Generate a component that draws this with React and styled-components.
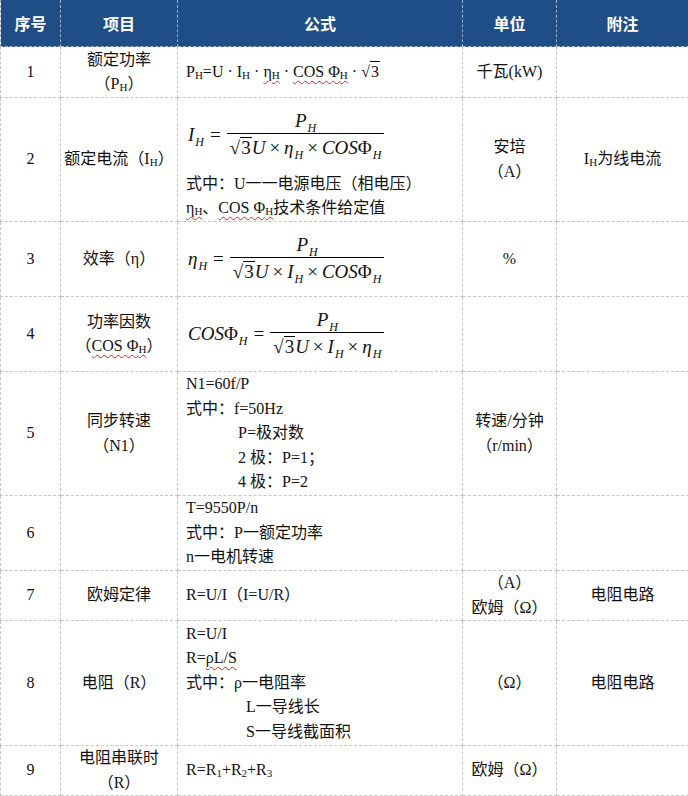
import React from "react";
import styled, { createGlobalStyle } from "styled-components";

const GlobalStyle = createGlobalStyle`
  html, body { margin: 0; padding: 0; background: #fff; }
`;

const Table = styled.table`
  width: 688px;
  border-collapse: collapse;
  table-layout: fixed;
  font-family: "Liberation Serif", "Noto Sans CJK SC", serif;
  font-size: 16px;
  color: #111;
`;

const Col = styled.col`
  width: ${(p) => p.$w}px;
`;

const HeadCell = styled.th`
  height: 46px;
  padding: 0;
  background: #1f4e86;
  color: #fff;
  font-family: "Noto Sans CJK SC", sans-serif;
  font-weight: 700;
  font-size: 16px;
  text-align: center;
  border: 1px dashed #9fb0c8;
  border-top: none;
`;

const Row = styled.tr`
  height: ${(p) => p.$h}px;
`;

const Cell = styled.td`
  padding: ${(p) => (p.$left ? "0 2px 0 8px" : "0")};
  text-align: ${(p) => (p.$left ? "left" : "center")};
  vertical-align: middle;
  line-height: 24.5px;
  white-space: nowrap;
  border: 1px dashed #c6c6c6;
`;

const Line = styled.div`
  padding-left: ${(p) => p.$indent || 0}px;
`;

const Sub = styled.sub`
  font-size: 11px;
  vertical-align: -2px;
  line-height: 0;
`;

const Wavy = styled.span`
  text-decoration: underline wavy #e02424;
  text-decoration-thickness: 1px;
  text-underline-offset: 3px;
`;

const Eq = styled.div`
  display: flex;
  width: fit-content;
  align-items: center;
  gap: 6px;
  padding: 10px 0 11px 2px;
  font-size: 19px;
  font-style: italic;
  line-height: normal;
`;

const Frac = styled.span`
  display: inline-flex;
  flex-direction: column;
  align-items: center;
`;

const Num = styled.span`
  line-height: 24px;
  padding: 0 4px;
`;

const Den = styled.span`
  line-height: 26px;
  padding: 1px 3px 0;
  border-top: 1px solid #000;
`;

const Up = styled.span`
  font-style: normal;
`;

const Over = styled.span`
  font-style: normal;
  border-top: 1px solid #000;
  line-height: 20px;
  display: inline-block;
  padding: 0 1px;
`;

const Op = styled.span`
  font-style: normal;
  margin: 0 4px;
`;

const MSub = styled.sub`
  font-size: 12px;
  vertical-align: -5px;
  line-height: 0;
  margin-left: 1px;
`;

const Sqrt3 = () => (
  <>
    <Up>√</Up>
    <Over>3</Over>
  </>
);

const HEADERS = ["序号", "项目", "公式", "单位", "附注"];
const WIDTHS = [60, 117, 285, 94, 132];

export default function App() {
  return (
    <>
      <GlobalStyle />
      <Table>
        <colgroup>
          {WIDTHS.map((w, i) => (
            <Col key={i} $w={w} />
          ))}
        </colgroup>
        <thead>
          <tr>
            {HEADERS.map((h) => (
              <HeadCell key={h}>{h}</HeadCell>
            ))}
          </tr>
        </thead>
        <tbody>
          <Row $h={51}>
            <Cell>1</Cell>
            <Cell>
              <Line>额定功率</Line>
              <Line>（P<Sub>H</Sub>）</Line>
            </Cell>
            <Cell $left>
              P<Sub>H</Sub>=U · I<Sub>H</Sub> · <Wavy>η<Sub>H</Sub></Wavy> ·{" "}
              <Wavy>COS Φ<Sub>H</Sub></Wavy> · <Sqrt3 />
            </Cell>
            <Cell>千瓦(kW)</Cell>
            <Cell />
          </Row>

          <Row $h={124}>
            <Cell>2</Cell>
            <Cell>额定电流（I<Sub>H</Sub>）</Cell>
            <Cell $left>
              <Eq>
                <span>
                  I<MSub>H</MSub>
                </span>
                <Up>=</Up>
                <Frac>
                  <Num>
                    P<MSub>H</MSub>
                  </Num>
                  <Den>
                    <Sqrt3 />U<Op>×</Op>η<MSub>H</MSub>
                    <Op>×</Op>COS<Up>Φ</Up>
                    <MSub>H</MSub>
                  </Den>
                </Frac>
              </Eq>
              <Line>式中：U一一电源电压（相电压）</Line>
              <Line>
                <Wavy>η<Sub>H</Sub></Wavy>、<Wavy>COS Φ<Sub>H</Sub></Wavy>技术条件给定值
              </Line>
            </Cell>
            <Cell>
              <Line>安培</Line>
              <Line>（A）</Line>
            </Cell>
            <Cell>I<Sub>H</Sub>为线电流</Cell>
          </Row>

          <Row $h={75}>
            <Cell>3</Cell>
            <Cell>效率（η）</Cell>
            <Cell $left>
              <Eq>
                <span>
                  η<MSub>H</MSub>
                </span>
                <Up>=</Up>
                <Frac>
                  <Num>
                    P<MSub>H</MSub>
                  </Num>
                  <Den>
                    <Sqrt3 />U<Op>×</Op>I<MSub>H</MSub>
                    <Op>×</Op>COS<Up>Φ</Up>
                    <MSub>H</MSub>
                  </Den>
                </Frac>
              </Eq>
            </Cell>
            <Cell>%</Cell>
            <Cell />
          </Row>

          <Row $h={75}>
            <Cell>4</Cell>
            <Cell>
              <Line>功率因数</Line>
              <Line>
                （<Wavy>COS Φ<Sub>H</Sub></Wavy>）
              </Line>
            </Cell>
            <Cell $left>
              <Eq>
                <span>
                  COS<Up>Φ</Up>
                  <MSub>H</MSub>
                </span>
                <Up>=</Up>
                <Frac>
                  <Num>
                    P<MSub>H</MSub>
                  </Num>
                  <Den>
                    <Sqrt3 />U<Op>×</Op>I<MSub>H</MSub>
                    <Op>×</Op>η<MSub>H</MSub>
                  </Den>
                </Frac>
              </Eq>
            </Cell>
            <Cell />
            <Cell />
          </Row>

          <Row $h={124}>
            <Cell>5</Cell>
            <Cell>
              <Line>同步转速</Line>
              <Line>（N1）</Line>
            </Cell>
            <Cell $left>
              <Line>N1=60f/P</Line>
              <Line>式中：f=50Hz</Line>
              <Line $indent={52}>P=极对数</Line>
              <Line $indent={52}>2 极：P=1；</Line>
              <Line $indent={52}>4 极：P=2</Line>
            </Cell>
            <Cell>
              <Line>转速/分钟</Line>
              <Line>（r/min）</Line>
            </Cell>
            <Cell />
          </Row>

          <Row $h={75}>
            <Cell>6</Cell>
            <Cell />
            <Cell $left>
              <Line>T=9550P/n</Line>
              <Line>式中：P一额定功率</Line>
              <Line>n一电机转速</Line>
            </Cell>
            <Cell />
            <Cell />
          </Row>

          <Row $h={50}>
            <Cell>7</Cell>
            <Cell>欧姆定律</Cell>
            <Cell $left>R=U/I（I=U/R）</Cell>
            <Cell>
              <Line>（A）</Line>
              <Line>欧姆（Ω）</Line>
            </Cell>
            <Cell>电阻电路</Cell>
          </Row>

          <Row $h={125}>
            <Cell>8</Cell>
            <Cell>电阻（R）</Cell>
            <Cell $left>
              <Line>R=U/I</Line>
              <Line>
                R=<Wavy>ρL/S</Wavy>
              </Line>
              <Line>式中：ρ一电阻率</Line>
              <Line $indent={60}>L一导线长</Line>
              <Line $indent={60}>S一导线截面积</Line>
            </Cell>
            <Cell>（Ω）</Cell>
            <Cell>电阻电路</Cell>
          </Row>

          <Row $h={50}>
            <Cell>9</Cell>
            <Cell>
              <Line>电阻串联时</Line>
              <Line>（R）</Line>
            </Cell>
            <Cell $left>
              R=R<Sub>1</Sub>+R<Sub>2</Sub>+R<Sub>3</Sub>
            </Cell>
            <Cell>欧姆（Ω）</Cell>
            <Cell />
          </Row>
        </tbody>
      </Table>
    </>
  );
}
